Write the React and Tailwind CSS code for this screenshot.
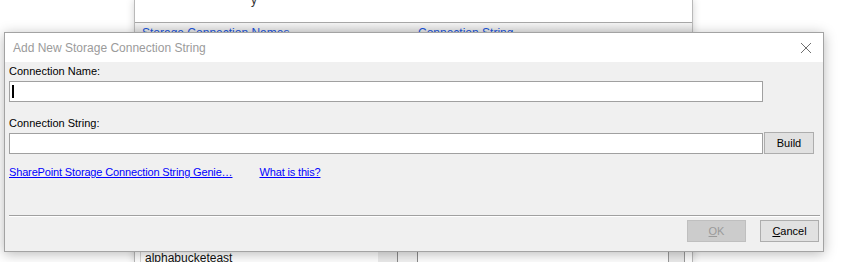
import React from "react";

const font = { fontFamily: '"Liberation Sans", Arial, sans-serif' };

function BackgroundWindow() {
  return (
    <div className="absolute left-[134px] top-0 w-[559px] h-[262px] bg-white border-l border-r border-[#b9b9b9] shadow-[0_0_8px_rgba(0,0,0,0.18)] flex flex-col">
      <div className="h-[23px] border-b border-[#a8a8a8] relative">
        <span className="absolute left-[116px] top-[-9px] text-[12px] text-[#333]">y</span>
      </div>
      <div className="h-[10px] bg-gradient-to-b from-[#f4f4f4] to-[#e0e0e0] flex text-[12px] text-[#1a53d8] leading-[14px]">
        <span className="ml-[7px] mt-[3px] w-[276px] whitespace-nowrap">Storage Connection Names</span>
        <span className="mt-[3px] whitespace-nowrap">Connection String</span>
      </div>
      <div className="flex-1 flex">
        <div className="w-[6px] border-r border-[#d6d6d6]" />
        <div className="w-[237px] flex flex-col justify-end">
          <span className="text-[12px] text-[#111] ml-[4px] leading-[13px] mb-[-3px]">alphabucketeast</span>
        </div>
        <div className="w-[20px] bg-[#ececec] border-r border-[#8a8a8a]" />
        <div className="w-[20px] border-r border-[#8a8a8a] bg-[#f3f3f3]" />
        <div className="flex-1" />
        <div className="w-[16px] bg-[#ececec] border-l border-[#9a9a9a]" />
        <div className="w-[8px] border-l border-[#9a9a9a]" />
      </div>
    </div>
  );
}

function Dialog() {
  return (
    <div className="absolute left-[4px] top-[32px] w-[820px] h-[220px] border border-[#a3a3a3] bg-[#f0f0f0] shadow-[0_2px_12px_rgba(0,0,0,0.28)] flex flex-col">
      <div className="h-[29px] bg-white flex items-center justify-between pl-[8px] pr-[11px]">
        <span className="text-[12px] text-[#9b9b9b]">
          Add New Storage Connection String
        </span>
        <svg width="12" height="12" viewBox="0 0 12 12">
          <path d="M1 1 L11 11 M11 1 L1 11" stroke="#6f6f6f" strokeWidth="1" fill="none" />
        </svg>
      </div>
      <div className="flex-1 flex flex-col pl-[4px] text-[11px] text-black leading-[13px]">
        <div className="mt-[3px]">Connection Name:</div>
        <div className="mt-[3px] w-[754px] h-[21px] bg-white border border-[#a0a0a0] flex items-center pl-[2px]">
          <div className="w-[2px] h-[13px] bg-black" />
        </div>
        <div className="mt-[15px]">Connection String:</div>
        <div className="mt-[2px] flex items-center gap-[1px]">
          <div className="w-[754px] h-[21px] bg-white border border-[#a0a0a0]" />
          <button className="w-[50px] h-[22px] bg-[#e1e1e1] border border-[#adadad] text-[11px] text-black">Build</button>
        </div>
        <div className="mt-[12px] flex text-[#0000ff] tracking-[-0.15px]">
          <a className="underline cursor-pointer">SharePoint Storage Connection String Genie…</a>
          <a className="underline cursor-pointer ml-[27px]">What is this?</a>
        </div>
        <div className="mt-[36px] w-[811px] border-t border-[#a0a0a0] border-b border-b-white" />
        <div className="mt-[3px] flex justify-end pr-[4px] gap-[14px]">
          <button className="w-[59px] h-[22px] bg-[#cccccc] border border-[#bfbfbf] text-[#9a9a9a] text-[11px]">
            <u>O</u>K
          </button>
          <button className="w-[59px] h-[22px] bg-[#e1e1e1] border border-[#adadad] text-black text-[11px]">
            <u>C</u>ancel
          </button>
        </div>
      </div>
    </div>
  );
}

export default function App() {
  return (
    <div className="relative w-[849px] h-[262px] bg-white overflow-hidden" style={font}>
      <BackgroundWindow />
      <Dialog />
    </div>
  );
}
